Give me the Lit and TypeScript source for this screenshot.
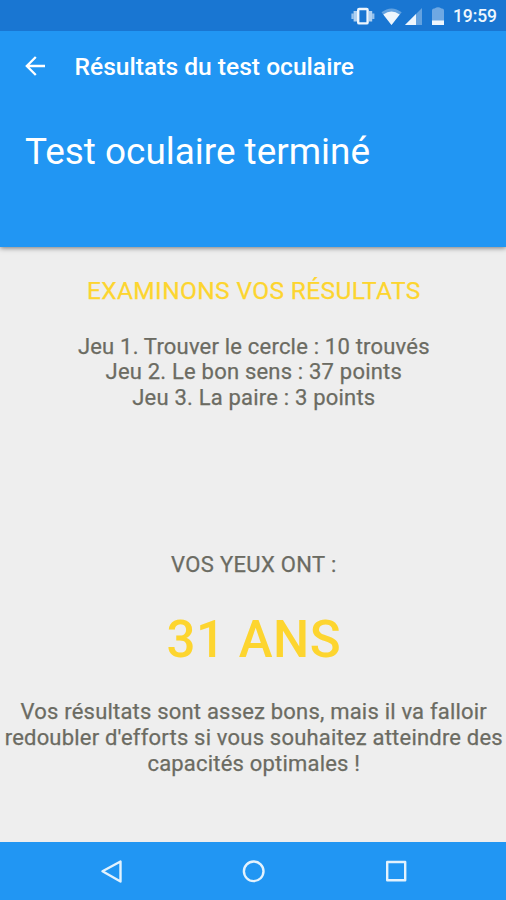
import { LitElement, html, css } from "lit";
import { customElement } from "lit/decorators.js";

@customElement("status-bar")
class StatusBar extends LitElement {
  static styles = css`
    :host { display: flex; height: 31px; background: #1976d2; color: #eef6fd; position: relative; z-index: 1; }
    svg { display: block; flex: 1; height: 31px; }
    .time { width: 53px; font: 500 17.5px/33px Roboto, sans-serif; letter-spacing: -0.1px; white-space: nowrap; }
  `;
  render() {
    return html`
      <svg viewBox="0 0 453 31" fill="#eef6fd">
        <rect x="358.2" y="9" width="9.4" height="14.4" rx="1" fill="none" stroke="#eef6fd" stroke-width="2.4" />
        <path d="M353.6 11h3.4v10.500h-3.400zM368.800 11h3.400v10.500h-3.400z" opacity=".7" />
        <path d="M351.400 13.500h2.200v5.500h-2.200zM372.200 13.500h2.200v5.500h-2.200z" opacity=".6" />
        <path d="M381.500 12.200Q391.500 4.600 401.700 12.200L391.500 25z" opacity=".35" />
        <path d="M383.300 14.400Q391.500 8.600 399.700 14.400L391.500 25z" />
        <path d="M405 25 422 8V25z" opacity=".35" />
        <path d="M405 25 416 14V25z" />
        <path d="M432 10.500q0-2 2-2h.500q3.500-2.500 7 0h.500q2 0 2 2V21H432z" opacity=".4" />
        <path d="M432 20.500h12V25H432z" />
      </svg>
      <div class="time">19:59</div>
    `;
  }
}

@customElement("result-header")
class ResultHeader extends LitElement {
  static styles = css`
    :host { display: block; height: 216px; background: #2196f3; color: #fff; box-shadow: 0 1px 5px rgba(0, 0, 0, 0.5); position: relative; }
    .bar { display: flex; align-items: center; height: 72px; padding-left: 24px; }
    .back { width: 23px; height: 23px; display: block; margin-top: -1px; }
    .title { margin-left: 27.500px; font: 500 24.600px/28px Roboto, sans-serif; white-space: nowrap; }
    h1 { margin: 27px 0 0 25px; font: 400 36.900px/44px Roboto, sans-serif; white-space: nowrap; }
  `;
  render() {
    return html`
      <div class="bar">
        <svg class="back" viewBox="0 0 23 23" fill="none" stroke="#fff" stroke-width="2.300">
          <path d="M21 11H3M11.800 2 2.800 11 11.800 20" />
        </svg>
        <div class="title">Résultats du test oculaire</div>
      </div>
      <h1>Test oculaire terminé</h1>
    `;
  }
}

@customElement("nav-bar")
class NavBar extends LitElement {
  static styles = css`
    :host { display: block; height: 58px; background: #2196f3; }
    svg { display: block; width: 506px; height: 58px; }
  `;
  render() {
    return html`
      <svg viewBox="0 0 506 58" fill="none" stroke="#e3f2fd" stroke-width="2.400" stroke-linejoin="round">
        <path d="M120.500 19.500V39.500L102.500 29.300z" />
        <circle cx="253.700" cy="29.300" r="9.800" />
        <rect x="387.200" y="20" width="18" height="18.200" />
      </svg>
    `;
  }
}

@customElement("app-root")
class AppRoot extends LitElement {
  static styles = css`
    :host { display: flex; flex-direction: column; width: 506px; height: 900px; overflow: hidden; background: #eee; font-family: Roboto, sans-serif; }
    main { flex: 1; padding-left: 1.600px; text-align: center; color: #6b6b62; white-space: nowrap; font-size: 22px; line-height: 25.800px; letter-spacing: 0.200px; -webkit-text-stroke: 0.250px; }
    .section { margin-top: 30px; color: #fdd52f; font-size: 24.500px; line-height: 28px; letter-spacing: 0.370px; }
    .scores { margin-top: 28.600px; }
    .label { margin-top: 141.200px; letter-spacing: 0.350px; }
    .age { margin-top: 31.400px; color: #fdd52f; font-size: 51px; line-height: 62px; font-weight: 500; letter-spacing: 0.500px; -webkit-text-stroke: 0; }
    .advice { margin-top: 28px; }
  `;
  render() {
    return html`
      <status-bar></status-bar>
      <result-header></result-header>
      <main>
        <div class="section">EXAMINONS VOS RÉSULTATS</div>
        <div class="scores">
          <div>Jeu 1. Trouver le cercle : 10 trouvés</div>
          <div>Jeu 2. Le bon sens : 37 points</div>
          <div>Jeu 3. La paire : 3 points</div>
        </div>
        <div class="label">VOS YEUX ONT :</div>
        <div class="age">31 ANS</div>
        <div class="advice">
          <div>Vos résultats sont assez bons, mais il va falloir</div>
          <div>redoubler d'efforts si vous souhaitez atteindre des</div>
          <div>capacités optimales !</div>
        </div>
      </main>
      <nav-bar></nav-bar>
    `;
  }
}
